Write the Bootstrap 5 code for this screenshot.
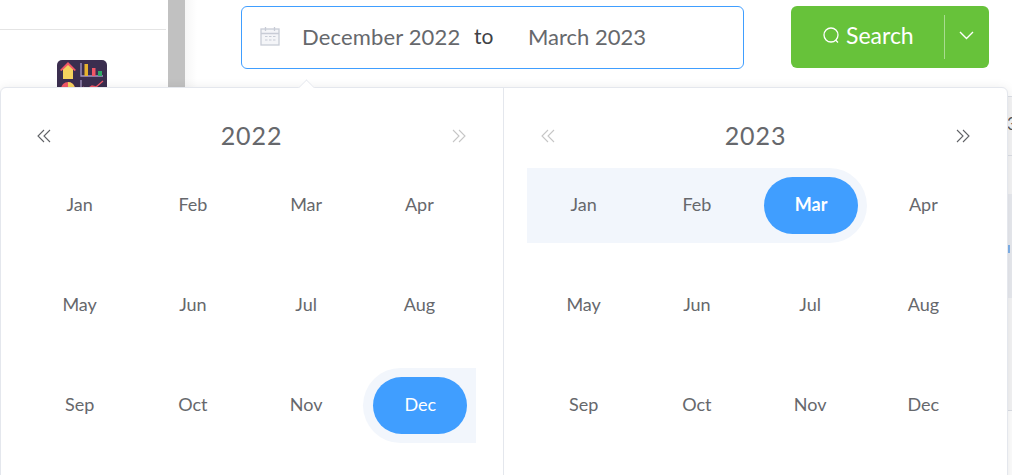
<!doctype html>
<html lang="en">
<head>
  <meta charset="utf-8">
  <meta name="viewport" content="width=device-width, initial-scale=1">
  <title>Date range</title>
  <link href="https://cdn.jsdelivr.net/npm/bootstrap@5.3.5/dist/css/bootstrap.min.css" rel="stylesheet">
  <style>
    body {
      width: 1012px;
      height: 475px;
      overflow: hidden;
      position: relative;
      background: #fff;
      font-family: Lato, "Open Sans", sans-serif;
      color: #66686c;
    }

    .side-panel {
      width: 166px;
      height: 475px;
      flex: none;
    }

    .side-head {
      height: 30px;
      border-bottom: 1px solid #e4e4e4;
    }

    .app-logo {
      width: 50px;
      height: 40px;
      margin: 30px 0 0 57px;
      display: block;
    }

    .gutter-bar {
      width: 17px;
      height: 475px;
      margin-left: 2px;
      background: #c1c1c1;
      flex: none;
    }

    .main-area {
      background: linear-gradient(90deg, #f6f6f6, #fff 12px);
      height: 475px;
      min-width: 0;
    }

    .toolbar-row {
      padding: 6px 0 0 56px;
    }

    .range-input {
      width: 503px;
      height: 63px;
      flex: none;
      border: 1px solid #409eff;
      border-radius: 6px;
      padding: 0 0 3px 18px;
      font-size: 22px;
      white-space: nowrap;
      background: #fff;
    }

    .range-input .from-val { margin-left: 22px; width: 158px; letter-spacing: .15px; }
    .range-input .to-sep { margin-left: 14px; color: #404246; font-size: 21px; width: 54px; }

    .search-group {
      width: 198px;
      height: 62px;
      flex: none;
      margin-left: 47px;
      background: #67c23a;
      border-radius: 6px;
      color: #fff;
      font-size: 23px;
    }

    .search-main { width: 153px; padding: 0 0 3px 32px; gap: 6px; }
    .search-sep { width: 1px; height: 44px; background: #a9dc90; }
    .search-caret { width: 43px; padding-bottom: 3px; }

    .edge-peek {
      margin: 27px 0 0 822px;
      width: 8px;
      background: #f5f5f6;
      font-size: 17px;
      line-height: 1;
      color: #555;
    }

    .peek-head { height: 60px; border-top: 1px solid #dcdfe6; border-bottom: 1px solid #dcdfe6; padding-top: 18px; }
    .peek-gap { height: 38px; }
    .peek-hover { height: 104px; background: #e9ebf0; padding-top: 51px; }
    .peek-tick { display: block; width: 2px; height: 8px; margin-left: 1px; background: #7fb2ec; }
    .peek-line { height: 113px; border-bottom: 1px solid #dcdfe6; }

    .date-popup {
      position: absolute;
      left: 0;
      top: 87px;
      width: 1008px;
      height: 400px;
      background: #fff;
      border: 1px solid #e4e7ed;
      border-radius: 6px;
      box-shadow: 0 2px 12px rgba(0, 0, 0, .1);
    }

    .popup-arrow {
      position: absolute;
      left: 298px;
      top: -8px;
      width: 15px;
      height: 15px;
      background: #fff;
      border-left: 1px solid #e4e7ed;
      border-top: 1px solid #e4e7ed;
      transform: rotate(45deg) scale(.75);
    }

    .cal-pane {
      width: 502px;
      flex: none;
      padding: 0 0 0 22px;
    }

    .cal-pane + .cal-pane {
      width: 504px;
      padding-left: 23px;
      border-left: 1px solid #e4e7ed;
    }

    .cal-head {
      height: 80px;
      width: 453px;
      padding: 16px 10px 0 14px;
    }

    .cal-title {
      font-size: 25px;
      letter-spacing: .9px;
    }

    .nav-arrow { display: block; color: #606266; }
    .nav-arrow.is-off { color: #c6c6c6; }

    .month-grid {
      display: grid;
      grid-template-columns: repeat(4, 1fr);
      grid-auto-rows: 100px;
      width: 453px;
    }

    .month-cell {
      font-size: 18px;
      display: flex;
      align-items: center;
      justify-content: center;
      height: 75px;
      margin-bottom: 25px;
      padding-bottom: 2px;
    }

    .cell-pill {
      width: 94px;
      height: 57px;
      margin-left: 2px;
      border-radius: 29px;
      display: flex;
      align-items: center;
      justify-content: center;
      padding-bottom: 2px;
    }

    .month-cell.is-active { padding-bottom: 0; }
    .is-active .cell-pill { background: #409eff; color: #fff; }
    .is-range { background: #f2f6fc; }
    .is-end { background: #f2f6fc; border-radius: 0 38px 38px 0; }
    .is-start { background: #f2f6fc; border-radius: 38px 0 0 38px; }
  </style>
</head>

<body>
  <div class="d-flex">
    <div class="side-panel">
      <div class="side-head"></div>
      <svg class="app-logo" viewBox="0 0 50 40">
        <rect width="50" height="40" rx="5" fill="#3b2e4f"/>
        <path d="M6 19h10V9l-5-5-5 5z" fill="#f4d35e"/>
        <path d="M3 10l8-8 8 8-1.500 1L11 5l-6.500 6z" fill="#f25767"/>
        <path d="M24 3v13h22" fill="none" stroke="#a697c5" stroke-width="1.300"/>
        <rect x="27.500" y="4" width="3.500" height="12" fill="#e7b32e"/>
        <rect x="35" y="8" width="3.500" height="8" fill="#f25767"/>
        <rect x="41" y="11" width="4" height="5" fill="#2fa866"/>
        <circle cx="11" cy="29" r="7" fill="#f25767"/>
        <path d="M11 22a7 7 0 0 1 7 7h-7z" fill="#f4d35e"/>
        <path d="M24 20v20" stroke="#a697c5" stroke-width="1.300"/>
        <path d="M26 27l4 2 5-3 4 1 7-6" fill="none" stroke="#f25767" stroke-width="1.300"/>
      </svg>
    </div>
    <div class="gutter-bar"></div>
    <div class="main-area flex-grow-1">
      <div class="toolbar-row d-flex">
        <div class="range-input d-flex align-items-center">
          <svg width="20" height="20" viewBox="0 0 20 20" fill="none" stroke="#c8ccd6" stroke-width="1.300">
            <rect x="1" y="3" width="18" height="16" fill="#f4f5f8"/>
            <path d="M1 7.500h18M5.500 1v4M14.500 1v4"/>
            <path d="M5 10.500h2.500M9 10.500h2.500M13 10.500h2.500M5 14h2.500M9 14h2.500M13 14h2.500" stroke-width="1"/>
          </svg>
          <span class="from-val">December 2022</span>
          <span class="to-sep">to</span>
          <span>March 2023</span>
        </div>
        <div class="search-group d-flex align-items-center">
          <div class="search-main d-flex align-items-center">
            <svg width="17" height="17" viewBox="0 0 17 17" fill="none" stroke="#fff" stroke-width="1.300">
              <circle cx="8" cy="8" r="7"/>
              <path d="M12.500 13l2.500 2.500"/>
            </svg>
            <span>Search</span>
          </div>
          <div class="search-sep"></div>
          <div class="search-caret d-flex justify-content-center">
            <svg width="15" height="9" viewBox="0 0 15 9" fill="none" stroke="#fff" stroke-width="1.400">
              <path d="M1 1l6.500 6.500L14 1"/>
            </svg>
          </div>
        </div>
      </div>
      <div class="edge-peek">
        <div class="peek-head">3</div>
        <div class="peek-gap"></div>
        <div class="peek-hover"><span class="peek-tick"></span></div>
        <div class="peek-line"></div>
      </div>
    </div>
  </div>

  <div class="date-popup d-flex">
    <div class="popup-arrow"></div>
    <div class="cal-pane">
      <div class="cal-head d-flex align-items-center justify-content-between">
        <svg class="nav-arrow" width="14" height="14" viewBox="0 0 14 14" fill="none" stroke="currentColor" stroke-width="1.100"><path d="M7 1L1 7l6 6M13 1L7 7l6 6"/></svg>
        <span class="cal-title">2022</span>
        <svg class="nav-arrow is-off" width="14" height="14" viewBox="0 0 14 14" fill="none" stroke="currentColor" stroke-width="1.100"><path d="M1 1l6 6-6 6M7 1l6 6-6 6"/></svg>
      </div>
      <div class="month-grid">
        <div class="month-cell">Jan</div>
        <div class="month-cell">Feb</div>
        <div class="month-cell">Mar</div>
        <div class="month-cell">Apr</div>
        <div class="month-cell">May</div>
        <div class="month-cell">Jun</div>
        <div class="month-cell">Jul</div>
        <div class="month-cell">Aug</div>
        <div class="month-cell">Sep</div>
        <div class="month-cell">Oct</div>
        <div class="month-cell">Nov</div>
        <div class="month-cell is-start is-active"><div class="cell-pill">Dec</div></div>
      </div>
    </div>
    <div class="cal-pane">
      <div class="cal-head d-flex align-items-center justify-content-between">
        <svg class="nav-arrow is-off" width="14" height="14" viewBox="0 0 14 14" fill="none" stroke="currentColor" stroke-width="1.100"><path d="M7 1L1 7l6 6M13 1L7 7l6 6"/></svg>
        <span class="cal-title">2023</span>
        <svg class="nav-arrow" width="14" height="14" viewBox="0 0 14 14" fill="none" stroke="currentColor" stroke-width="1.100"><path d="M1 1l6 6-6 6M7 1l6 6-6 6"/></svg>
      </div>
      <div class="month-grid">
        <div class="month-cell is-range">Jan</div>
        <div class="month-cell is-range">Feb</div>
        <div class="month-cell is-end is-active fw-bold"><div class="cell-pill">Mar</div></div>
        <div class="month-cell">Apr</div>
        <div class="month-cell">May</div>
        <div class="month-cell">Jun</div>
        <div class="month-cell">Jul</div>
        <div class="month-cell">Aug</div>
        <div class="month-cell">Sep</div>
        <div class="month-cell">Oct</div>
        <div class="month-cell">Nov</div>
        <div class="month-cell">Dec</div>
      </div>
    </div>
  </div>

  <script src="https://cdn.jsdelivr.net/npm/bootstrap@5.3.5/dist/js/bootstrap.bundle.min.js"></script>
</body>
</html>
